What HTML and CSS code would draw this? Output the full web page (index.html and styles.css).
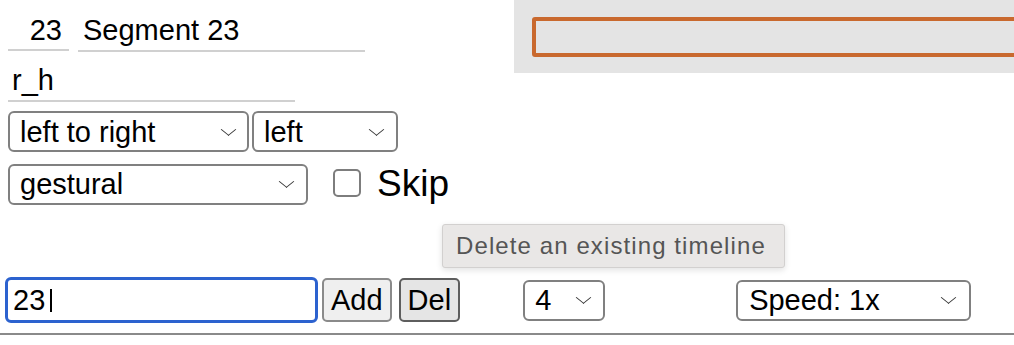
FILE: index.html
```html
<!DOCTYPE html>
<html lang="en">
<head>
    <meta charset="UTF-8">
    <title>Segment editor</title>
    <link rel="stylesheet" href="styles.css">
</head>
<body>
    <div class="top">
        <div class="controls">
            <div class="row row-name">
                <input class="seg-num" type="text" value="23">
                <input class="seg-title" type="text" value="Segment 23">
            </div>
            <div class="row row-id">
                <input class="seg-id" type="text" value="r_h">
            </div>
            <div class="row row-dir">
                <span class="sel sel-dir">
                    <select><option>left to right</option></select>
                </span>
                <span class="sel sel-align">
                    <select><option>left</option></select>
                </span>
            </div>
            <div class="row row-style">
                <span class="sel sel-style">
                    <select><option>gestural</option></select>
                </span>
                <label class="skip">
                    <input type="checkbox">
                    <span>Skip</span>
                </label>
            </div>
        </div>
        <div class="preview">
            <div class="frame"></div>
        </div>
    </div>

    <div class="toolbar">
        <div class="tooltip">Delete an existing timeline</div>
        <div class="field">
            <input class="timeline-input" type="text" value="23">
            <span class="caret"></span>
        </div>
        <button class="btn">Add</button>
        <button class="btn btn-hover">Del</button>
        <span class="sel sel-count">
            <select><option>4</option></select>
        </span>
        <span class="sel sel-speed">
            <select><option>Speed: 1x</option></select>
        </span>
    </div>
    <div class="rule"></div>
</body>
</html>
```

FILE: styles.css
```css
:root {
    --field-border: #808080;
    --underline: #d0d0d0;
    --focus: #2c62cf;
    --orange: #c9692e;
}

body {
    margin: 0;
    padding: 0;
    background: #fff;
    color: #000;
    font-family: 'Liberation Sans', Arial, sans-serif;
}

input, select, button {
    font-family: 'Liberation Sans', Arial, sans-serif;
    font-size: 29px;
    color: #000;
    box-sizing: border-box;
}

.top {
    display: flex;
    align-items: flex-start;
    height: 204px;
}

.controls {
    width: 514px;
    padding-left: 8px;
    box-sizing: border-box;
}

.row {
    display: flex;
    align-items: center;
}

/* underlined text fields */
.row-name {
    margin-top: 10px;
}

.row-name input,
.row-id input {
    border: none;
    border-bottom: 2px solid var(--underline);
    background: transparent;
    outline: none;
    padding: 0;
}

.seg-num {
    width: 61px;
    height: 40px;
    text-align: right;
    padding-right: 7px !important;
}

.seg-title {
    width: 287px;
    height: 42px;
    margin-left: 9px;
    padding-left: 5px !important;
}

.row-id {
    margin-top: 8px;
}

.seg-id {
    width: 287px;
    height: 42px;
    padding-left: 4px !important;
}

/* selects with drawn chevron */
.sel {
    position: relative;
    display: inline-block;
}

.sel select {
    appearance: none;
    -webkit-appearance: none;
    background: #fff;
    border: 2px solid var(--field-border);
    border-radius: 6px;
    height: 41px;
    padding: 0 30px 0 10px;
    margin: 0;
}

.sel::after {
    content: "";
    position: absolute;
    top: 50%;
    width: 10px;
    height: 10px;
    margin-top: -8px;
    border-right: 1.5px solid #333;
    border-bottom: 1.5px solid #333;
    transform: scaleY(0.8) rotate(45deg);
    pointer-events: none;
}

.row-dir {
    margin-top: 9px;
}

.sel-dir select { width: 241px; }
.sel-dir::after { right: 15px; }

.sel-align { margin-left: 3px; }
.sel-align select { width: 146px; }
.sel-align::after { right: 16px; }

.row-style {
    margin-top: 11px;
}

.sel-style select { width: 300px; }
.sel-style::after { right: 16px; }

.skip {
    display: flex;
    align-items: center;
    margin-left: 25px;
    font-size: 37px;
}

.skip input {
    appearance: none;
    -webkit-appearance: none;
    width: 28px;
    height: 28px;
    margin: 0 16px 2px 0;
    border: 2px solid #7d7d7d;
    border-radius: 5px;
    background: #fff;
}

/* right preview panel */
.preview {
    flex: 1;
    height: 73px;
    background: #e4e4e4;
    overflow: hidden;
    padding: 17px 0 0 18px;
    box-sizing: border-box;
}

.frame {
    width: 600px;
    height: 40px;
    border: 4px solid var(--orange);
    border-radius: 3px;
    box-sizing: border-box;
}

/* bottom toolbar */
.toolbar {
    position: relative;
    display: flex;
    align-items: center;
    margin-top: 73px;
    padding-left: 5px;
    height: 46px;
}

.tooltip {
    position: absolute;
    left: 442px;
    top: -53px;
    width: 343px;
    height: 44px;
    box-sizing: border-box;
    background: #e9e7e6;
    border: 1px solid #d2d0cf;
    border-radius: 3px;
    box-shadow: 0 2px 6px rgba(0, 0, 0, 0.12);
    color: #555;
    font-size: 24px;
    letter-spacing: 1.1px;
    line-height: 42px;
    padding-left: 13px;
    white-space: nowrap;
    z-index: 2;
}

.field {
    position: relative;
}

.timeline-input {
    width: 313px;
    height: 46px;
    border: 3px solid var(--focus);
    border-radius: 6px;
    padding: 0 0 0 5px;
    outline: none;
}

.caret {
    position: absolute;
    left: 45px;
    top: 12px;
    width: 2px;
    height: 23px;
    background: #000;
}

.btn {
    height: 44px;
    margin-left: 4px;
    padding: 0 7px;
    background: #efefef;
    border: 2px solid #8a8a8a;
    border-radius: 5px;
}

.btn-hover {
    margin-left: 7px;
    background: #e5e5e5;
    border-color: #5e5e5e;
}

.sel-count { margin-left: 63px; }
.sel-count select { width: 82px; }
.sel-count::after { right: 16px; }

.sel-speed { margin-left: 131px; }
.sel-speed select { width: 235px; padding-left: 11px; }
.sel-speed::after { right: 17px; }

.rule {
    margin-top: 10px;
    height: 2px;
    background: #8a8a8a;
}
```
